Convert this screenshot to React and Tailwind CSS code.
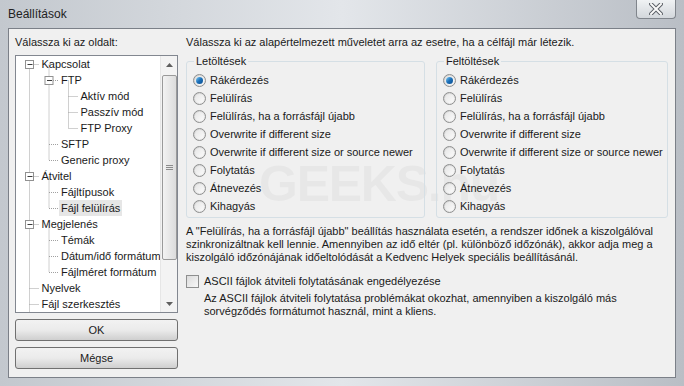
import React from "react";

const font = { fontFamily: '"Liberation Sans", Arial, sans-serif' };

const tree = [
  [0, "Kapcsolat", true],
  [1, "FTP", true],
  [2, "Aktív mód"],
  [2, "Passzív mód"],
  [2, "FTP Proxy"],
  [1, "SFTP"],
  [1, "Generic proxy"],
  [0, "Átvitel", true],
  [1, "Fájltípusok"],
  [1, "Fájl felülírás", false, true],
  [0, "Megjelenés", true],
  [1, "Témák"],
  [1, "Dátum/idő formátum"],
  [1, "Fájlméret formátum"],
  [0, "Nyelvek"],
  [0, "Fájl szerkesztés"],
];

const options = [
  "Rákérdezés",
  "Felülírás",
  "Felülírás, ha a forrásfájl újabb",
  "Overwrite if different size",
  "Overwrite if different size or source newer",
  "Folytatás",
  "Átnevezés",
  "Kihagyás",
];

const lineX = (l) => 13.5 + 19.5 * l;
const rowY = (i) => 8.5 + 16 * i;

function TreeLines() {
  const lines = [];
  tree.forEach(([lvl], i) => {
    const x = lineX(lvl);
    const y = rowY(i);
    lines.push(<line key={"h" + i} x1={x} y1={y} x2={x + 9} y2={y} />);
    // vertical up to previous sibling / parent
    let j = i - 1;
    while (j >= 0 && tree[j][0] > lvl) j--;
    if (j >= 0 && tree[j][0] >= lvl - 1) {
      lines.push(<line key={"v" + i} x1={x} y1={rowY(j)} x2={x} y2={y} />);
    }
  });
  lines.push(<line key="tail" x1={lineX(0)} y1={rowY(15)} x2={lineX(0)} y2={260} />);
  return (
    <svg className="absolute left-0 top-0" width="145" height="256">
      <g stroke="#a0a0a0" strokeDasharray="1 1" strokeWidth="1">{lines}</g>
      {tree.map(([lvl, , kids], i) =>
        kids ? (
          <g key={"b" + i}>
            <rect x={lineX(lvl) - 4} y={rowY(i) - 4} width="8" height="8" fill="#fff" stroke="#919191" />
            <line x1={lineX(lvl) - 2} y1={rowY(i)} x2={lineX(lvl) + 3} y2={rowY(i)} stroke="#3d3d3d" />
          </g>
        ) : null
      )}
    </svg>
  );
}

function Scrollbar() {
  return (
    <div className="w-[17px] h-full bg-[#f3f3f3] border-l border-[#e6e6e6] flex flex-col items-center">
      <div className="h-[17px] w-full flex items-center justify-center">
        <svg width="7" height="4"><path d="M0 4 L3.5 0 L7 4 Z" fill="#5f5f5f" /></svg>
      </div>
      <div className="mt-[2px] w-[15px] h-[185px] rounded-[2px] border border-[#9a9a9a] bg-gradient-to-r from-[#f3f3f3] to-[#dcdcdc] flex items-center justify-center">
        <div className="flex flex-col gap-[1px]">
          <div className="w-[7px] h-[1px] bg-[#8c8c8c]" />
          <div className="w-[7px] h-[1px] bg-[#8c8c8c]" />
          <div className="w-[7px] h-[1px] bg-[#8c8c8c]" />
        </div>
      </div>
      <div className="flex-1" />
      <div className="h-[17px] w-full flex items-center justify-center">
        <svg width="7" height="4"><path d="M0 0 L3.5 4 L7 0 Z" fill="#5f5f5f" /></svg>
      </div>
    </div>
  );
}

function Radio({ checked }) {
  return (
    <div className="w-[13px] h-[13px] rounded-full border border-[#8e8f8f] bg-gradient-to-br from-[#cfcfcf] to-[#f4f4f4] flex items-center justify-center shrink-0">
      <div className="w-[9px] h-[9px] rounded-full bg-gradient-to-br from-[#e6e6e6] to-[#fbfbfb] flex items-center justify-center">
        {checked && <div className="w-[7px] h-[7px] rounded-full bg-gradient-to-br from-[#7ccff7] via-[#1b6fb8] to-[#0b4f91]" />}
      </div>
    </div>
  );
}

function Group({ title, className }) {
  return (
    <fieldset className={`border border-[#d5dfe5] rounded-[3px] pl-[6px] pb-[2px] pt-[3px] ${className}`}>
      <legend className="px-[2px] ml-[1px] leading-[13px]">{title}</legend>
      <div className="flex flex-col">
        {options.map((o, i) => (
          <div key={o} className="h-[18px] flex items-center gap-[4px] whitespace-nowrap">
            <Radio checked={i === 0} />
            <span>{o}</span>
          </div>
        ))}
      </div>
    </fieldset>
  );
}

function Btn({ children }) {
  return (
    <button className="h-[22px] w-full rounded-[3px] border border-[#707070] bg-gradient-to-b from-[#f2f2f2] via-[#ebebeb] to-[#cfcfcf] text-[#1a1a1a]">
      {children}
    </button>
  );
}

export default function App() {
  return (
    <div
      className="w-[684px] h-[386px] flex flex-col bg-gradient-to-r from-[#c3c8ce] via-[#e3e6ea] to-[#b9bec5] text-[11px] text-[#1a1a1a] overflow-hidden"
      style={font}
    >
      {/* Title bar */}
      <div className="h-[28px] flex items-start shrink-0">
        <div className="pl-[8px] pt-[5px] text-[12px] text-[#222]">Beállítások</div>
        <div className="flex-1" />
        <div className="mr-[8px] w-[40px] h-[19px] rounded-b-[4px] border border-t-0 border-[#80858c] bg-gradient-to-b from-[#f0f2f4] to-[#d3d7dc] flex items-center justify-center">
          <svg width="14" height="12" viewBox="0 0 14 12">
            <path d="M2 1 L12 11 M12 1 L2 11" stroke="#5b5f66" strokeWidth="4" strokeLinecap="square" />
            <path d="M2 1 L12 11 M12 1 L2 11" stroke="#fafafa" strokeWidth="2" strokeLinecap="square" />
          </svg>
        </div>
      </div>

      {/* Client area */}
      <div className="flex-1 mx-[8px] mb-[8px] border border-[#7b8088] bg-[#f0f0f0] flex pl-[6px] pr-[7px] pt-[6px] relative">
        {/* watermark */}
        <div className="absolute left-[250px] top-[130px] text-[50px] leading-none font-bold tracking-tight text-[#000]/[0.035] pointer-events-none">
          GEEKS.hu
        </div>

        {/* Left column */}
        <div className="w-[163px] flex flex-col relative">
          <div className="h-[14px] leading-[14px]">Válassza ki az oldalt:</div>
          <div className="mt-[6px] h-[258px] border border-[#828790] bg-white flex">
            <div className="flex-1 relative overflow-hidden">
              <TreeLines />
              {tree.map(([lvl, label, , sel], i) => (
                <div key={label} className="h-[16px] flex items-center whitespace-nowrap relative" style={{ paddingLeft: lineX(lvl) + 10 }}>
                  <span className={`px-[2px] leading-[16px] ${sel ? "bg-[#e6e6e6]" : ""}`}>{label}</span>
                </div>
              ))}
            </div>
            <Scrollbar />
          </div>
          <div className="mt-[6px] flex flex-col gap-[6px]">
            <Btn>OK</Btn>
            <Btn>Mégse</Btn>
          </div>
        </div>

        {/* Right column */}
        <div className="flex-1 ml-[8px] flex flex-col relative">
          <div className="h-[14px] leading-[14px] whitespace-nowrap">Válassza ki az alapértelmezett műveletet arra az esetre, ha a célfájl már létezik.</div>
          <div className="mt-[6px] flex gap-[11px]">
            <Group title="Letöltések" className="w-[239px]" />
            <Group title="Feltöltések" className="flex-1" />
          </div>
          <p className="mt-[7px] leading-[13px]">
            A "Felülírás, ha a forrásfájl újabb" beállítás használata esetén, a rendszer időnek a kiszolgálóval szinkronizáltnak kell lennie. Amennyiben az idő eltér (pl. különböző időzónák), akkor adja meg a kiszolgáló időzónájának időeltolódását a Kedvenc Helyek speciális beállításánál.
          </p>
          <div className="mt-[10px] flex items-center gap-[5px] h-[14px]">
            <div className="w-[13px] h-[13px] border border-[#8e8f8f] bg-gradient-to-br from-[#dcdcdc] to-[#f7f7f7]" />
            <span>ASCII fájlok átviteli folytatásának engedélyezése</span>
          </div>
          <p className="mt-[4px] ml-[18px] leading-[13px]">
            Az ASCII fájlok átviteli folytatása problémákat okozhat, amennyiben a kiszolgáló más sorvégződés formátumot használ, mint a kliens.
          </p>
        </div>
      </div>
    </div>
  );
}
